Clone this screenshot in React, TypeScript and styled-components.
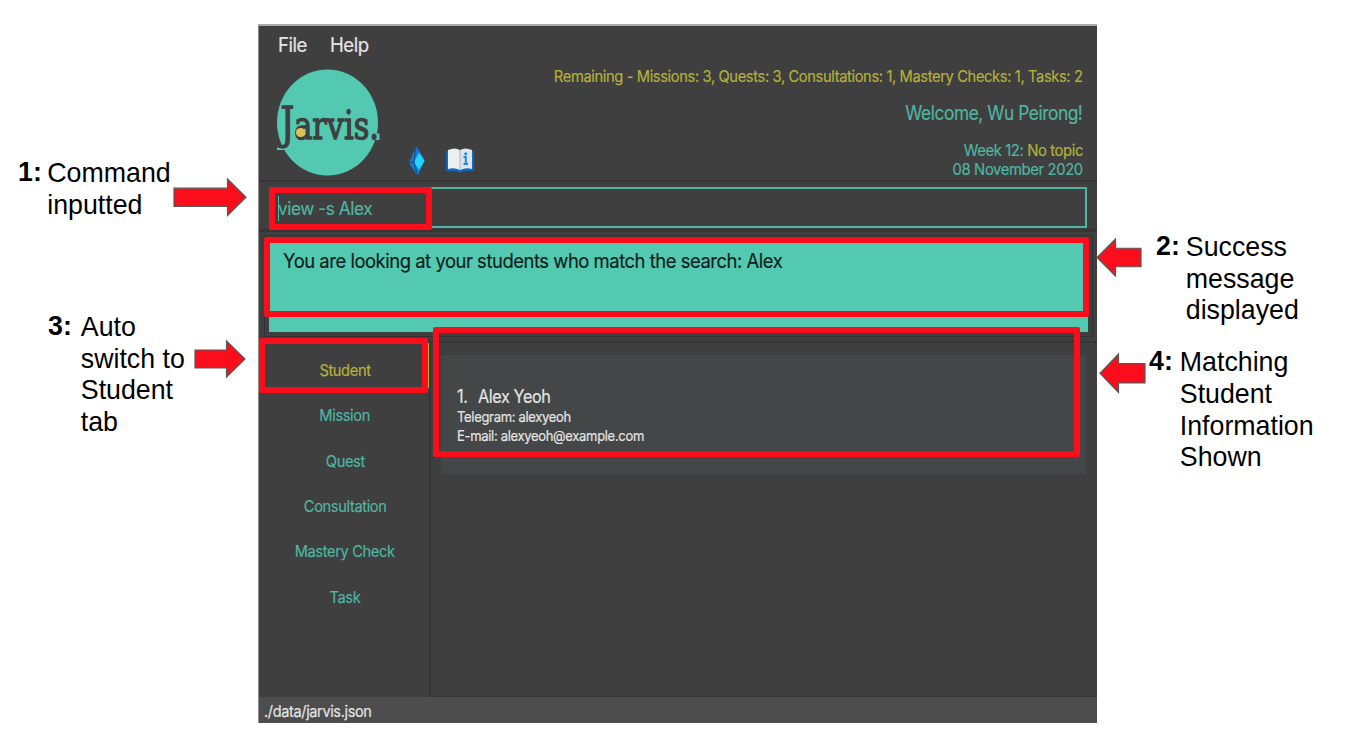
import React from 'react';
import styled, { createGlobalStyle } from 'styled-components';

const teal = '#54c9b2';
const tealText = '#4fb5a2';
const yellow = '#b5b03a';
const dark = '#3f3f3f';
const line = '#353535';
const red = '#fc0d1b';

const GlobalStyle = createGlobalStyle`
  * { box-sizing: border-box; }
  body { margin: 0; background: #fff; overflow: hidden; }
`;

const Page = styled.div`
  position: relative;
  display: grid;
  grid-template-columns: 258px 839px 1fr;
  width: 1362px;
  height: 750px;
  font-family: Inter, "Liberation Sans", sans-serif;
`;

const Notes = styled.aside`
  display: flex;
  flex-direction: column;
  font-family: "Liberation Sans", Arial, sans-serif;
  font-size: 26.75px;
  line-height: 31.7px;
  color: #000;
`;

const Note = styled.div<{ $top: number; $left: number; $gap: number }>`
  display: flex;
  align-items: flex-start;
  gap: ${(p) => p.$gap}px;
  margin: ${(p) => p.$top}px 0 0 ${(p) => p.$left}px;
  white-space: pre;
`;

const NoteNumber = styled.b`
  margin-top: -1px;
`;

const Window = styled.main`
  display: flex;
  flex-direction: column;
  margin-top: 24px;
  height: 699px;
  background: ${dark};
  border-top: 2px solid #a9acab;
  border-left: 1px solid #8b8b8b;
`;

const Label = styled.span<{ $size: number; $scale?: number; $color?: string; $origin?: string; $leading?: number }>`
  display: inline-block;
  white-space: pre;
  font-size: ${(p) => p.$size}px;
  letter-spacing: -0.025em;
  line-height: ${(p) => (p.$leading ? `${p.$leading}px` : '1.2')};
  color: ${(p) => p.$color ?? '#e4e4e4'};
  -webkit-text-stroke: 0.2px currentColor;
  transform: scaleX(${(p) => p.$scale ?? 1});
  transform-origin: ${(p) => p.$origin ?? 'left'} center;
`;

const WeekName = styled.span`
  color: ${tealText};
`;

const MenuBar = styled.nav`
  display: flex;
  gap: 21px;
  height: 37px;
  padding: 7px 0 0 19px;
`;

const Header = styled.header`
  display: flex;
  justify-content: space-between;
  height: 119px;
  padding: 0 14px 0 17px;
  border-bottom: 2px solid ${line};
`;

const Brand = styled.div`
  display: flex;
  align-items: flex-start;
  padding-top: 6px;
`;

const Shortcuts = styled.div`
  display: flex;
  align-items: center;
  gap: 21px;
  margin: 76px 0 0 26.5px;
  height: 32px;
`;

const Summary = styled.div`
  display: flex;
  flex-direction: column;
  align-items: flex-end;
  padding-top: 4px;
`;

const Welcome = styled.div`
  display: flex;
  margin: 16px 1px 0 0;
`;

const Calendar = styled.div`
  display: flex;
  flex-direction: column;
  align-items: flex-end;
  margin-top: 15px;
`;

const CommandArea = styled.section`
  height: 50px;
  padding: 5px 10px 0 11px;
  border-bottom: 3px solid ${line};
`;

const CommandField = styled.div`
  display: flex;
  align-items: center;
  height: 41px;
  padding: 2px 0 0 6px;
  border: 2px solid ${tealText};
`;

const Caret = styled.i`
  width: 1px;
  height: 25px;
  margin-right: -1px;
  background: ${tealText};
`;

const ResultArea = styled.section`
  height: 111px;
  padding: 3px 4px 0 5px;
  border-bottom: 2px solid ${line};
`;

const ResultFrame = styled.div`
  height: 102px;
  padding: 4px;
  border: 1px solid #323232;
`;

const ResultBox = styled.div`
  height: 92px;
  padding: 9px 0 0 13.5px;
  background: ${teal};
`;

const Body = styled.section`
  display: flex;
  height: 354px;
`;

const Tabs = styled.div`
  width: 172px;
  border-right: 2px solid ${line};
`;

const Tab = styled.div<{ $active?: boolean }>`
  display: flex;
  align-items: center;
  justify-content: center;
  height: 45.3px;
  padding-top: 10px;
  padding-left: 2px;
  border: 1px solid ${(p) => (p.$active ? yellow : 'transparent')};
`;

const Content = styled.div`
  flex: 1;
  padding: 12px 11px 0 10px;
  border-bottom: 1px solid ${line};
`;

const Card = styled.article`
  display: flex;
  flex-direction: column;
  align-items: flex-start;
  height: 119px;
  padding: 31px 0 0 16px;
  background: #444747;
`;

const CardTitle = styled.div`
  display: flex;
  gap: 9px;
  height: 20.5px;
`;

const StatusBar = styled.footer`
  flex: 1;
  padding: 6px 0 0 5px;
  line-height: 0;
  background: #4d4d4d;
`;

const Highlight = styled.div<{ $x: number; $y: number; $w: number; $h: number }>`
  position: absolute;
  left: ${(p) => p.$x}px;
  top: ${(p) => p.$y}px;
  width: ${(p) => p.$w}px;
  height: ${(p) => p.$h}px;
  border: 6px solid ${red};
  border-radius: 2px;
`;

const ArrowSvg = styled.svg<{ $x: number; $y: number }>`
  position: absolute;
  left: ${(p) => p.$x}px;
  top: ${(p) => p.$y}px;
  overflow: visible;
`;

const Arrow = ({ x, y, w, h, left }: { x: number; y: number; w: number; h: number; left?: boolean }) => {
  const head = 18.5;
  const q = h / 4;
  const right = `0,${q} ${w - head},${q} ${w - head},0 ${w},${h / 2} ${w - head},${h} ${w - head},${h - q} 0,${h - q}`;
  const leftward = `${w},${q} ${head},${q} ${head},0 0,${h / 2} ${head},${h} ${head},${h - q} ${w},${h - q}`;
  return (
    <ArrowSvg $x={x} $y={y} width={w} height={h}>
      <polygon points={left ? leftward : right} fill={red} stroke="#595959" strokeWidth="1.2" />
    </ArrowSvg>
  );
};

const LogoSvg = styled.svg`
  overflow: visible;
  font-family: "DejaVu Serif", serif;
`;

const Logo = () => (
  <LogoSvg width="106" height="108" viewBox="0 0 106 108">
    <ellipse cx="51.5" cy="53.5" rx="50.5" ry="53" fill={teal} />
    <path d="M1 75.500h8v5.500H1zM98 64.500h5.500v6.500H98z" fill={teal} />
    <text x="4.500" y="70" fontSize="40" textLength="98.500" lengthAdjust="spacingAndGlyphs" fill={dark} stroke={dark} strokeWidth="1.500">
      <tspan fontSize="45">J</tspan>arvis.
    </text>
    <circle cx="24.500" cy="63.500" r="4.600" fill="#dcc052" />
  </LogoSvg>
);

const Gem = () => (
  <svg width="16" height="30" viewBox="0 0 16 30">
    <path d="M7 0 16 14 8.500 30 0 17z" fill="#1678d0" />
    <path d="M10 6.500 15.500 15 10 24 5 16z" fill="#22d3fa" />
    <path d="M7 0 5 16 8.500 30M0 17l5-1" fill="none" stroke="#174b7d" />
  </svg>
);

const Book = () => (
  <svg width="28" height="26" viewBox="0 0 28 26">
    <path d="M0 3h28v20H17l-3 2-3-2H0z" fill="#1467c0" />
    <path d="M2 2Q9-1 14 2v20Q8 19 2 21z" fill="#eceff1" />
    <path d="M26 2Q19-1 14 2v20q6-3 12-1z" fill="#dfe5ea" />
    <path d="M14 2v20" stroke="#a9b4bb" />
    <path d="M17.500 9h2.300v6.500M17.500 16h4.500" fill="none" stroke="#2287e2" strokeWidth="2" />
    <circle cx="19.700" cy="5.800" r="1.500" fill="#2287e2" />
  </svg>
);

const tabs = ['Student', 'Mission', 'Quest', 'Consultation', 'Mastery Check', 'Task'];

export default function App() {
  return (
    <Page>
      <GlobalStyle />
      <Notes>
        <Note $top={158} $left={18} $gap={5.5}>
          <NoteNumber>1:</NoteNumber>
          <span>{'Command\ninputted'}</span>
        </Note>
        <Note $top={90.5} $left={48} $gap={9}>
          <NoteNumber>3:</NoteNumber>
          <span>{'Auto\nswitch to\nStudent\ntab'}</span>
        </Note>
      </Notes>

      <Window>
        <MenuBar>
          <Label $size={20} $scale={0.93}>File</Label>
          <Label $size={20} $scale={0.93}>Help</Label>
        </MenuBar>
        <Header>
          <Brand>
            <Logo />
            <Shortcuts>
              <Gem />
              <Book />
            </Shortcuts>
          </Brand>
          <Summary>
            <Label $size={16} $scale={0.917} $color={yellow} $origin="right">
              Remaining - Missions: 3, Quests: 3, Consultations: 1, Mastery Checks: 1, Tasks: 2
            </Label>
            <Welcome>
              <Label $size={19.5} $scale={0.888} $color={tealText} $origin="right">Welcome, Wu Peirong!</Label>
            </Welcome>
            <Calendar>
              <Label $size={16} $scale={0.925} $color={yellow} $origin="right">
                <WeekName>Week 12: </WeekName>No topic
              </Label>
              <Label $size={16} $scale={0.925} $color={tealText} $origin="right">08 November 2020</Label>
            </Calendar>
          </Summary>
        </Header>
        <CommandArea>
          <CommandField>
            <Caret />
            <Label $size={18} $scale={0.955} $color={tealText}>view -s Alex</Label>
          </CommandField>
        </CommandArea>
        <ResultArea>
          <ResultFrame>
            <ResultBox>
              <Label $size={20} $scale={0.921} $color="#0d1f1c">
                You are looking at your students who match the search: Alex
              </Label>
            </ResultBox>
          </ResultFrame>
        </ResultArea>
        <Body>
          <Tabs>
            {tabs.map((tab, index) => (
              <Tab key={tab} $active={index === 0}>
                <Label $size={16} $scale={0.915} $color={index === 0 ? yellow : tealText} $origin="center">{tab}</Label>
              </Tab>
            ))}
          </Tabs>
          <Content>
            <Card>
              <CardTitle>
                <Label $size={18} $scale={0.9}>1.</Label>
                <Label $size={18} $scale={0.9}>Alex Yeoh</Label>
              </CardTitle>
              <Label $size={14} $scale={0.93} $leading={19.5}>Telegram: alexyeoh</Label>
              <Label $size={14} $scale={0.93} $leading={19.5}>E-mail: alexyeoh@example.com</Label>
            </Card>
          </Content>
        </Body>
        <StatusBar>
          <Label $size={15.5} $scale={0.937}>./data/jarvis.json</Label>
        </StatusBar>
      </Window>

      <Notes>
        <Note $top={232} $left={59} $gap={6}>
          <NoteNumber>2:</NoteNumber>
          <span>{'Success\nmessage\ndisplayed'}</span>
        </Note>
        <Note $top={20} $left={52} $gap={7}>
          <NoteNumber>4:</NoteNumber>
          <span>{'Matching\nStudent\nInformation\nShown'}</span>
        </Note>
      </Notes>

      <Highlight $x={269} $y={187} $w={163} $h={43} />
      <Highlight $x={264} $y={237} $w={825} $h={80} />
      <Highlight $x={259} $y={338} $w={169} $h={55} />
      <Highlight $x={433} $y={327} $w={647} $h={130} />
      <Arrow x={173.5} y={178.5} w={72} h={36.5} />
      <Arrow x={194.5} y={341} w={50} h={36} />
      <Arrow x={1097} y={239} w={44} h={37} left />
      <Arrow x={1100} y={354} w={45} h={38.5} left />
    </Page>
  );
}
